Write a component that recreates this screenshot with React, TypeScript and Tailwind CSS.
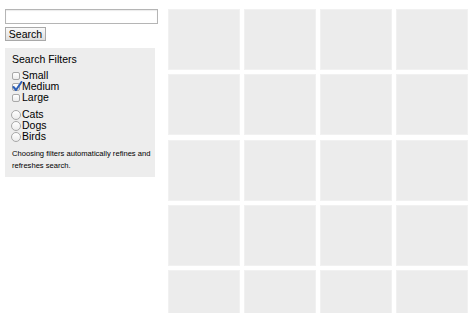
import React from "react";

const sizes = [
  { label: "Small", checked: false },
  { label: "Medium", checked: true },
  { label: "Large", checked: false },
];

const animals = ["Cats", "Dogs", "Birds"];

function CheckBox({ checked }: { checked: boolean }) {
  return (
    <span className="relative mr-[2px] inline-block h-[8px] w-[8px] rounded-[2px] border border-[#a8a8a8] bg-gradient-to-b from-white to-[#ececec]">
      {checked && (
        <svg
          className="absolute -left-[1px] -top-[3px]"
          width="11"
          height="11"
          viewBox="0 0 11 11"
        >
          <path
            d="M1.5 6 L4 9 L9.5 1"
            fill="none"
            stroke="#2c5fb8"
            strokeWidth="2"
            strokeLinecap="round"
            strokeLinejoin="round"
          />
        </svg>
      )}
    </span>
  );
}

function Radio() {
  return (
    <span className="mr-[1px] inline-block h-[10px] w-[10px] rounded-full border border-[#a8a8a8] bg-gradient-to-b from-white to-[#ececec]" />
  );
}

export default function App() {
  const tiles = Array.from({ length: 20 }, (_, i) => i);

  return (
    <div
      className="flex h-[313px] overflow-hidden bg-white pl-[5px] pt-[9px] text-black"
      style={{ fontFamily: '"Liberation Sans", Arial, sans-serif' }}
    >
      {/* sidebar */}
      <div className="flex w-[153px] shrink-0 flex-col">
        <input
          type="text"
          className="h-[15px] w-[153px] border border-[#b5b5b5] bg-white shadow-[inset_0_1px_1px_rgba(0,0,0,0.08)] outline-none"
        />
        <button className="mt-[3px] flex h-[14px] w-[41px] items-center justify-center border border-[#a9a9a9] bg-gradient-to-b from-[#fafafa] to-[#dedede] text-[10.5px] leading-none">
          Search
        </button>

        <div className="mt-[7px] w-[150px] bg-[#ededed] pb-[5px] pl-[7px] pr-[3px] pt-[5px]">
          <div className="h-[12px] text-[10.5px] leading-[12px]">Search Filters</div>

          <div className="mt-[5px] flex flex-col">
            {sizes.map((s) => (
              <label
                key={s.label}
                className="flex h-[11px] items-center text-[10.5px] leading-[11px]"
              >
                <CheckBox checked={s.checked} />
                {s.label}
              </label>
            ))}
          </div>

          <div className="mt-[6px] flex flex-col">
            {animals.map((a) => (
              <label
                key={a}
                className="-ml-[1px] flex h-[11px] items-center text-[10.5px] leading-[11px]"
              >
                <Radio />
                {a}
              </label>
            ))}
          </div>

          <p className="mt-[6px] text-[7.6px] leading-[12px]">
            Choosing filters automatically refines and refreshes search.
          </p>
        </div>
      </div>

      {/* results grid */}
      <div className="ml-[10px] grid grid-cols-[repeat(4,72px)] content-start gap-x-[4px] gap-y-[4.25px]">
        {tiles.map((t) => (
          <div
            key={t}
            className="h-[61px] w-[72px] border border-[#f1f1f1] bg-[#ececec]"
          />
        ))}
      </div>
    </div>
  );
}
